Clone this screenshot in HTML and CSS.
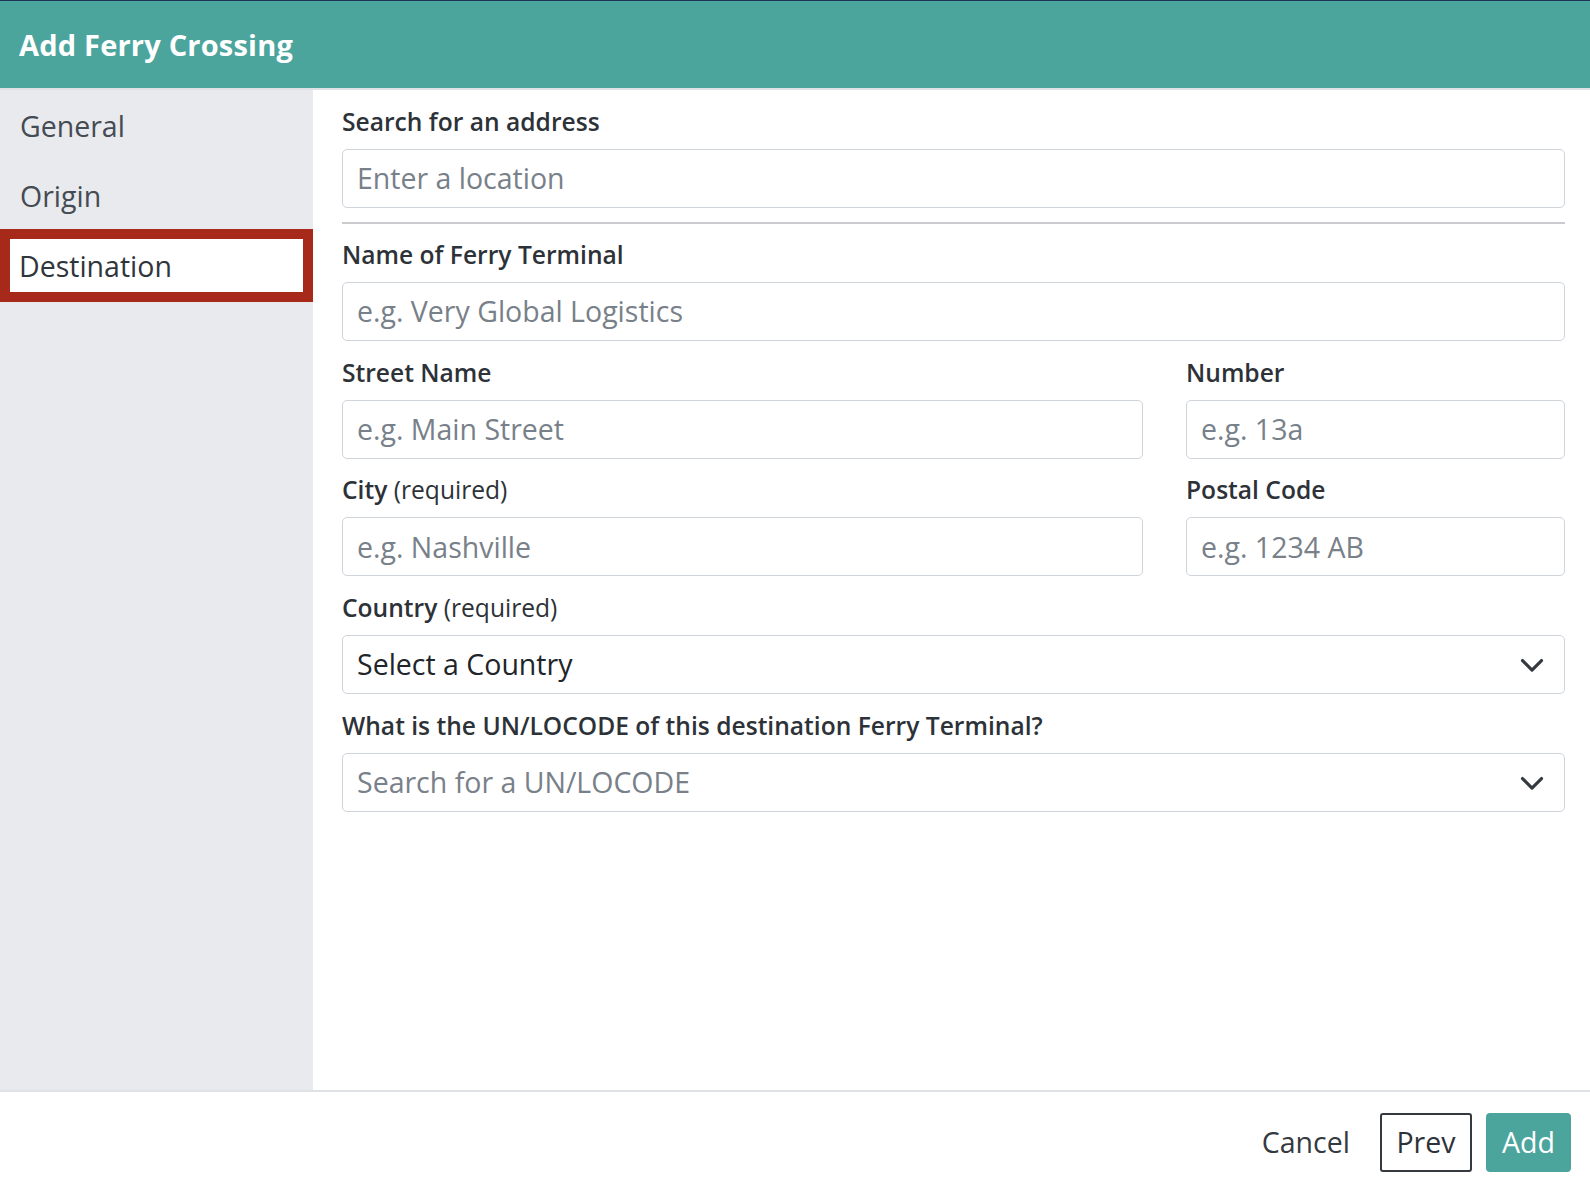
FILE: index.html
```html
<!DOCTYPE html>
<html lang="en">
<head>
<meta charset="utf-8">
<title>Add Ferry Crossing</title>
<link rel="stylesheet" href="styles.css">
</head>
<body>
<div class="modal">
  <header class="modal-header">
    <h1 class="modal-title">Add Ferry Crossing</h1>
  </header>

  <div class="modal-body">
    <nav class="steps">
      <a class="step">General</a>
      <a class="step">Origin</a>
      <a class="step step-active">Destination</a>
    </nav>

    <form class="form">
      <div class="group group-search">
        <label class="label">Search for an address</label>
        <div class="input placeholder">Enter a location</div>
      </div>
      <hr class="divider">

      <div class="group">
        <label class="label">Name of Ferry Terminal</label>
        <div class="input placeholder">e.g. Very Global Logistics</div>
      </div>

      <div class="row">
        <div class="group">
          <label class="label">Street Name</label>
          <div class="input placeholder">e.g. Main Street</div>
        </div>
        <div class="group">
          <label class="label">Number</label>
          <div class="input placeholder">e.g. 13a</div>
        </div>
      </div>

      <div class="row">
        <div class="group">
          <label class="label">City <span class="hint">(required)</span></label>
          <div class="input placeholder">e.g. Nashville</div>
        </div>
        <div class="group">
          <label class="label">Postal Code</label>
          <div class="input placeholder">e.g. 1234 AB</div>
        </div>
      </div>

      <div class="group">
        <label class="label">Country <span class="hint">(required)</span></label>
        <div class="input select">
          <span class="value">Select a Country</span>
          <svg class="chevron" viewBox="0 0 16 12" width="26" height="19" aria-hidden="true"><path d="M2 3.5l6 6 6-6" fill="none" stroke="#343a40" stroke-width="2" stroke-linecap="round" stroke-linejoin="round"/></svg>
        </div>
      </div>

      <div class="group">
        <label class="label">What is the UN/LOCODE of this destination Ferry Terminal?</label>
        <div class="input select">
          <span class="placeholder">Search for a UN/LOCODE</span>
          <svg class="chevron" viewBox="0 0 16 12" width="26" height="19" aria-hidden="true"><path d="M2 3.5l6 6 6-6" fill="none" stroke="#343a40" stroke-width="2" stroke-linecap="round" stroke-linejoin="round"/></svg>
        </div>
      </div>
    </form>
  </div>

  <footer class="modal-footer">
    <button class="btn btn-link" type="button">Cancel</button>
    <button class="btn btn-outline" type="button">Prev</button>
    <button class="btn btn-primary" type="button">Add</button>
  </footer>
</div>
</body>
</html>
```

FILE: styles.css
```css
* {
  box-sizing: border-box;
}

html, body {
  margin: 0;
  height: 100%;
}

body {
  font-family: "Open Sans", "Noto Sans", sans-serif;
  color: #2d3238;
  background: #ffffff;
}

.modal {
  display: flex;
  flex-direction: column;
  height: 1192px;
}

/* Header bar */
.modal-header {
  flex: 0 0 90px;
  display: flex;
  align-items: center;
  padding: 0 19px;
  background: #4ca59d;
  border-top: 1px solid #1e3356;
  border-bottom: 2px solid #dee1e5;
}

.modal-title {
  margin: 0;
  font-size: 29px;
  font-weight: 700;
  letter-spacing: 0.2px;
  color: #ffffff;
}

/* Body: step list + form */
.modal-body {
  flex: 1 1 auto;
  display: flex;
  min-height: 0;
}

.steps {
  flex: 0 0 313px;
  display: flex;
  flex-direction: column;
  padding-top: 1px;
  background: #e9eaee;
}

.step {
  display: flex;
  align-items: center;
  height: 70px;
  padding-left: 20px;
  font-size: 28.5px;
  color: #454b52;
  cursor: pointer;
}

.step-active {
  height: 73px;
  margin-top: -2px;
  padding-left: 9px;
  background: #ffffff;
  border: 10px solid #a6291a;
  color: #30353b;
}

.form {
  flex: 1 1 auto;
  padding: 13px 25px 0 29px;
}

.group {
  margin-bottom: 12.8px;
}

.group-search {
  margin-bottom: 14px;
}

.label {
  display: block;
  margin-bottom: 7.5px;
  font-size: 24.6px;
  line-height: 38.4px;
  font-weight: 600;
  color: #2d3238;
}

.hint {
  font-weight: 400;
}

.divider {
  margin: 0 0 12px;
  border: 0;
  border-top: 2px solid #c9cbce;
}

.row {
  display: grid;
  grid-template-columns: 1fr 379px;
  column-gap: 43px;
}

.input {
  display: flex;
  align-items: center;
  height: 59px;
  padding: 0 14px;
  font-size: 28.5px;
  color: #212529;
  background: #ffffff;
  border: 1px solid #ced4da;
  border-radius: 5px;
}

.placeholder {
  color: #788089;
}

.select {
  justify-content: space-between;
  padding-right: 19px;
}

.select .value {
  color: #212529;
}

.chevron {
  display: block;
  flex: 0 0 auto;
}

/* Footer with actions */
.modal-footer {
  flex: 0 0 102px;
  display: flex;
  align-items: center;
  justify-content: flex-end;
  gap: 14.6px;
  padding: 0 19px 0 0;
  border-top: 2px solid #dee1e5;
}

.btn {
  height: 59px;
  padding: 0 14px;
  font-family: "Open Sans", "Noto Sans", sans-serif;
  font-size: 28.5px;
  border: 2px solid transparent;
  border-radius: 4px;
  background: transparent;
  color: #2d3238;
  cursor: pointer;
}

.btn-link {
  color: #343a40;
}

.btn-outline {
  border-color: #343a40;
  border-radius: 3px;
}

.btn-primary {
  background: #4ca59d;
  border-color: #4ca59d;
  color: #ffffff;
}
```
